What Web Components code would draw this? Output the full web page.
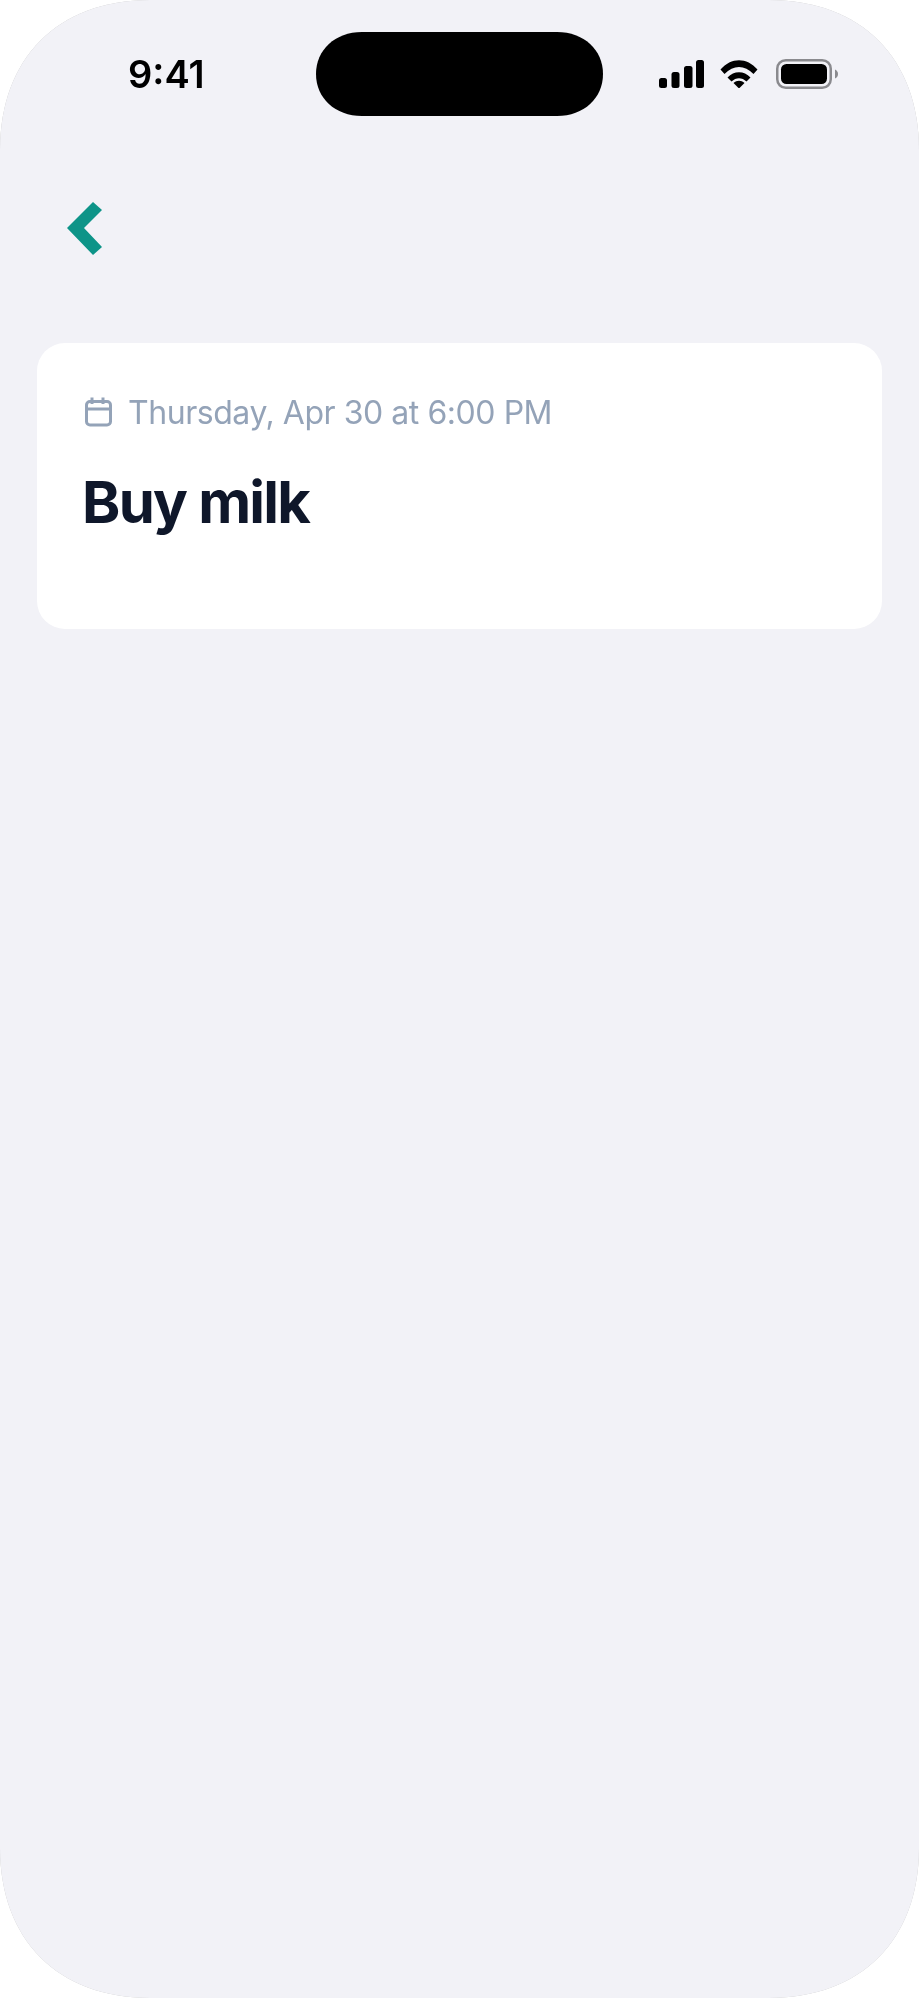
<!DOCTYPE html>
<html>
<head>
<meta charset="utf-8">
<style>
  html, body { margin: 0; padding: 0; background: #fff; }
</style>
</head>
<body>
<phone-frame>
  <status-bar></status-bar>
  <back-button></back-button>
  <task-card date="Thursday, Apr 30 at 6:00 PM">Buy milk</task-card>
</phone-frame>
<script>
class PhoneFrame extends HTMLElement {
    constructor() {
        super();
        this.attachShadow({mode: 'open'});
    }
    connectedCallback() {
        this.shadowRoot.innerHTML = `
            <style>
                :host {
                    display: block;
                    width: 919px;
                    height: 1998px;
                    font-family: Inter, "Liberation Sans", sans-serif;
                    filter: drop-shadow(0 0 0.5px rgba(0,0,0,.25));
                }
                .screen {
                    height: 100%;
                    overflow: hidden;
                    background: #f2f2f7;
                    clip-path: path("M0 150C0 58 58 0 150 0H769C861 0 919 58 919 150V1848C919 1940 861 1998 769 1998H150C58 1998 0 1940 0 1848Z");
                }
            </style>
            <div class="screen"><slot></slot></div>
        `;
    }
}

class StatusBar extends HTMLElement {
    constructor() {
        super();
        this.attachShadow({mode: 'open'});
    }
    connectedCallback() {
        this.shadowRoot.innerHTML = `
            <style>
                :host {
                    display: grid;
                    grid-template-columns: 316px 287px 1fr;
                    align-items: center;
                    padding-top: 32px;
                    height: 84px;
                }
                .time {
                    padding-left: 128px;
                    font-size: 38px;
                    font-weight: 600;
                    line-height: 46px;
                    color: #000;
                }
                .icons {
                    display: flex;
                    align-items: center;
                    padding-left: 56px;
                }
                .wifi { margin: 0 18px 0 16px; }
                svg { display: block; }
            </style>
            <div class="time">9:41</div>
            <svg width="287" height="84" viewBox="0 0 287 84">
                <path d="M46 0H241C268 0 287 18 287 42C287 66 268 84 241 84H46C19 84 0 66 0 42C0 18 19 0 46 0Z" fill="#000"/>
            </svg>
            <div class="icons">
                <svg width="45" height="28" viewBox="0 0 45 28" fill="#000">
                    <rect x="0" y="18" width="8" height="10" rx="2.5"/>
                    <rect x="12.5" y="12" width="8" height="16" rx="2.5"/>
                    <rect x="25" y="6" width="8.5" height="22" rx="2.5"/>
                    <rect x="37" y="0" width="8" height="28" rx="2.5"/>
                </svg>
                <svg class="wifi" width="38" height="28" viewBox="0 0 38 28" fill="#000">
                    <path d="M0.500 9.500C11 -3 27 -3 37.500 9.500L33.500 14C24.500 4.500 13.500 4.500 4.500 14Z"/>
                    <path d="M7.500 17.500C14 10.500 24 10.500 30.500 17.500L26.500 21.500C22 17 16 17 11.500 21.500Z"/>
                    <path d="M13.500 23C17 20 21 20 24.500 23L19 28.500Z"/>
                </svg>
                <svg width="63" height="30" viewBox="0 0 63 30" fill="none">
                    <rect x="1.250" y="1.250" width="53.500" height="27.500" rx="8.500" stroke="#8a8a8e" stroke-width="2.500"/>
                    <rect x="5" y="5" width="46" height="20" rx="5.500" fill="#000"/>
                    <path d="M59 10.500C61 11.500 62 13 62 15C62 17 61 18.500 59 19.500Z" fill="#8a8a8e"/>
                </svg>
            </div>
        `;
    }
}

class BackButton extends HTMLElement {
    constructor() {
        super();
        this.attachShadow({mode: 'open'});
    }
    connectedCallback() {
        this.shadowRoot.innerHTML = `
            <style>
                :host {
                    display: block;
                    padding: 86px 0 0 67px;
                }
                svg { display: block; }
            </style>
            <svg width="35" height="53" viewBox="0 0 35 53">
                <polygon points="0,26 26,0 35,8 17,26 35,45 26,53" fill="#0d9488"/>
            </svg>
        `;
    }
}

class TaskCard extends HTMLElement {
    constructor() {
        super();
        this.attachShadow({mode: 'open'});
    }
    connectedCallback() {
        this.shadowRoot.innerHTML = `
            <style>
                :host {
                    display: block;
                    margin: 88px 37px 0;
                    height: 286px;
                    box-sizing: border-box;
                    padding: 47px 46px 0;
                    background: #fff;
                    border-radius: 28px;
                }
                .date {
                    display: flex;
                    align-items: center;
                    gap: 15px;
                    height: 44px;
                    font-size: 32px;
                    line-height: 44px;
                    font-weight: 385;
                    letter-spacing: -0.45px;
                    color: #94a3b8;
                }
                .date span { padding-top: 2px; }
                .title {
                    margin: 32px 0 0 -1px;
                    font-size: 58px;
                    line-height: 72px;
                    font-weight: 700;
                    letter-spacing: -1.740px;
                    color: #0f172a;
                }
                svg { display: block; flex: none; }
            </style>
            <div class="date">
                <svg width="30" height="30" viewBox="0 0 30 30" fill="none" stroke="#94a3b8" stroke-width="3">
                    <rect x="3.500" y="4.500" width="24" height="23.500" rx="3.500"/>
                    <path d="M3.500 12H27.500M9 0.500V7M20 0.500V7"/>
                </svg>
                <span id="date"></span>
            </div>
            <div class="title"><slot></slot></div>
        `;
        this.shadowRoot.getElementById('date').textContent = this.getAttribute('date');
    }
}

customElements.define('phone-frame', PhoneFrame);
customElements.define('status-bar', StatusBar);
customElements.define('back-button', BackButton);
customElements.define('task-card', TaskCard);
</script>
</body>
</html>
